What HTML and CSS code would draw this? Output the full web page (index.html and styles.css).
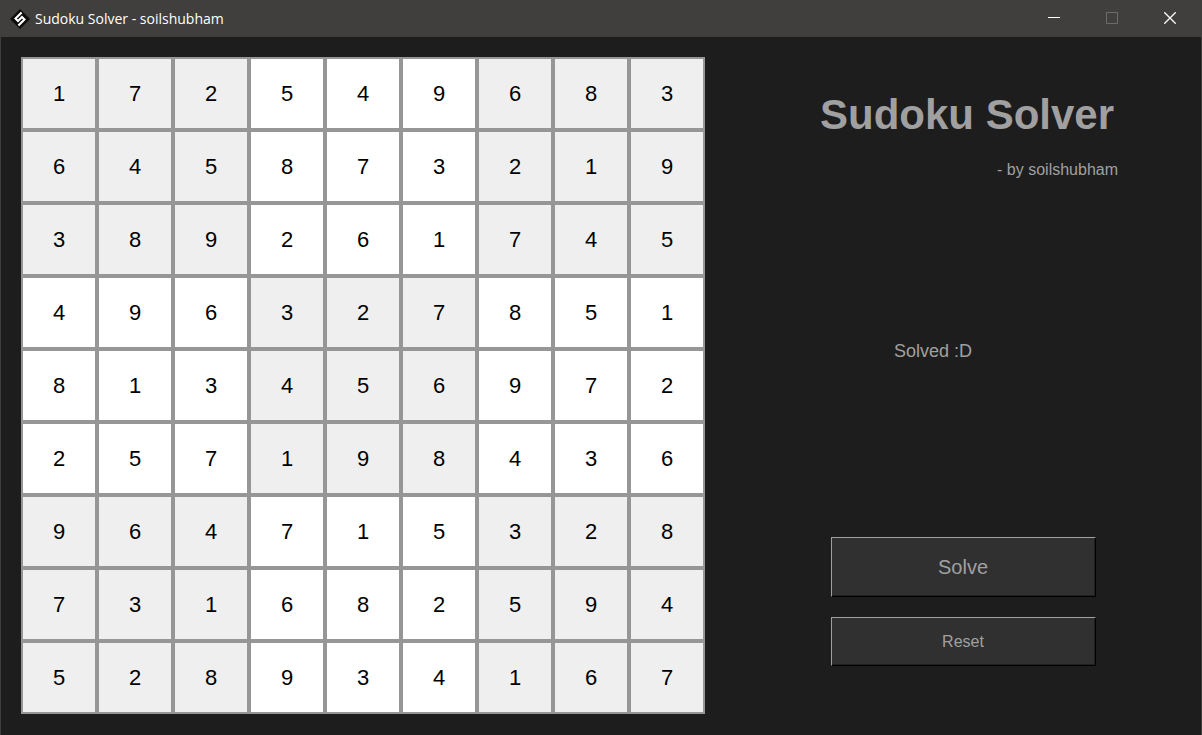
FILE: index.html
```html
<!DOCTYPE html>
<html lang="en">
<head>
<meta charset="utf-8">
<title>Sudoku Solver - soilshubham</title>
<link rel="stylesheet" href="styles.css">
</head>
<body>
<div class="window">
  <header class="titlebar">
    <svg class="app-icon" viewBox="0 0 20 20" aria-hidden="true">
      <path d="M10 0 20 10 10 20 0 10Z" fill="#0c0c0c"/>
      <path d="M11.6 3.4 5.5 9.5 8 12 12 8 14.5 10.5 8.4 16.6" fill="none" stroke="#fff" stroke-width="2.1"/>
    </svg>
    <span class="caption">Sudoku Solver - soilshubham</span>
    <div class="controls">
      <button class="control" type="button" aria-label="Minimize"><svg viewBox="0 0 12 12"><path d="M0 5.5H12"/></svg></button>
      <button class="control" type="button" aria-label="Maximize" disabled><svg viewBox="0 0 12 12"><path d="M.5.5H11.5V11.5H.5Z"/></svg></button>
      <button class="control" type="button" aria-label="Close"><svg viewBox="0 0 12 12"><path d="M.3.3 11.7 11.7M11.7.3.3 11.7" stroke-width="1.3"/></svg></button>
    </div>
  </header>
  <main class="content">
    <div class="board" id="board" role="group" aria-label="Sudoku board"></div>
    <section class="panel">
      <div class="heading">
        <h1 class="title">Sudoku Solver</h1>
        <p class="byline">- by soilshubham</p>
      </div>
      <p class="status" role="status">Solved :D</p>
      <div class="actions">
        <button class="action action-solve" type="button">Solve</button>
        <button class="action action-reset" type="button">Reset</button>
      </div>
    </section>
  </main>
</div>
<script src="script.js"></script>
</body>
</html>
```
FILE: styles.css
```css
* {
  box-sizing: border-box;
}

body {
  margin: 0;
  background: #1d1d1d;
  color: #a0a0a0;
  font-family: "Liberation Sans", Arial, sans-serif;
}

.window {
  display: flex;
  flex-direction: column;
  min-height: 100vh;
  border: 1px solid #3f3e3c;
  border-width: 0 1px;
}

.titlebar {
  display: flex;
  align-items: center;
  height: 37px;
  padding: 0 2px 0 9px;
  background: #403f3d;
  color: #fff;
}

.app-icon {
  width: 20px;
  height: 20px;
  margin-right: 5px;
}

.caption {
  font-family: "Open Sans", "Noto Sans", sans-serif;
  font-size: 14px;
}

.controls {
  display: flex;
  align-self: stretch;
  margin-left: auto;
}

.control {
  display: flex;
  align-items: center;
  justify-content: center;
  width: 58px;
  padding: 0 0 2px;
  border: 0;
  background: none;
  color: #fff;
}

.control:disabled {
  color: #6c6b69;
}

.control svg {
  width: 12px;
  height: 12px;
  fill: none;
  stroke: currentColor;
}

.content {
  display: flex;
  flex: 1;
  gap: 20px;
  padding: 20px 0 21px 20px;
}

.board {
  display: grid;
  flex: 0 1 684px;
  grid-template-columns: repeat(9, 1fr);
  grid-auto-rows: 1fr;
}

.cell {
  width: 100%;
  min-width: 0;
  padding: 0;
  border: 2px solid #969696;
  border-radius: 0;
  background: #fff;
  color: #000;
  font: 22px "Liberation Sans", Arial, sans-serif;
  text-align: center;
}

.cell-shaded {
  background: #efefef;
}

.panel {
  display: flex;
  flex: 1;
  flex-direction: column;
  align-items: center;
  justify-content: space-between;
  padding: 33px 0 48px;
}

.heading {
  display: flex;
  flex-direction: column;
  align-items: flex-end;
  gap: 21px;
  padding-left: 12px;
}

.title {
  margin: 0;
  padding-right: 4px;
  font-size: 42px;
  line-height: 50px;
}

.byline {
  margin: 0;
  font-size: 16px;
  line-height: 18px;
}

.status {
  margin: 0;
  padding: 0 60px 14px 0;
  font-size: 18px;
  line-height: 20px;
}

.actions {
  display: flex;
  flex-direction: column;
  gap: 20px;
  width: 265px;
}

.action {
  border: 1px solid;
  border-color: #a0a0a0 #000 #000 #a0a0a0;
  background: #303030;
  box-shadow: inset -1px -1px #202020;
  color: #a0a0a0;
  font-family: inherit;
}

.action-solve {
  height: 60px;
  font-size: 20px;
}

.action-reset {
  height: 49px;
  font-size: 16px;
}
```
FILE: script.js
```js
const rows = [
  "172549683",
  "645873219",
  "389261745",
  "496327851",
  "813456972",
  "257198436",
  "964715328",
  "731682594",
  "528934167"
];

const board = document.getElementById("board");

rows.forEach((row, r) => {
  [...row].forEach((digit, c) => {
    const cell = document.createElement("input");
    const block = Math.floor(r / 3) + Math.floor(c / 3);
    cell.className = block % 2 === 0 ? "cell cell-shaded" : "cell";
    cell.maxLength = 1;
    cell.inputMode = "numeric";
    cell.value = digit;
    cell.setAttribute("aria-label", `Row ${r + 1}, column ${c + 1}`);
    board.append(cell);
  });
});
```
